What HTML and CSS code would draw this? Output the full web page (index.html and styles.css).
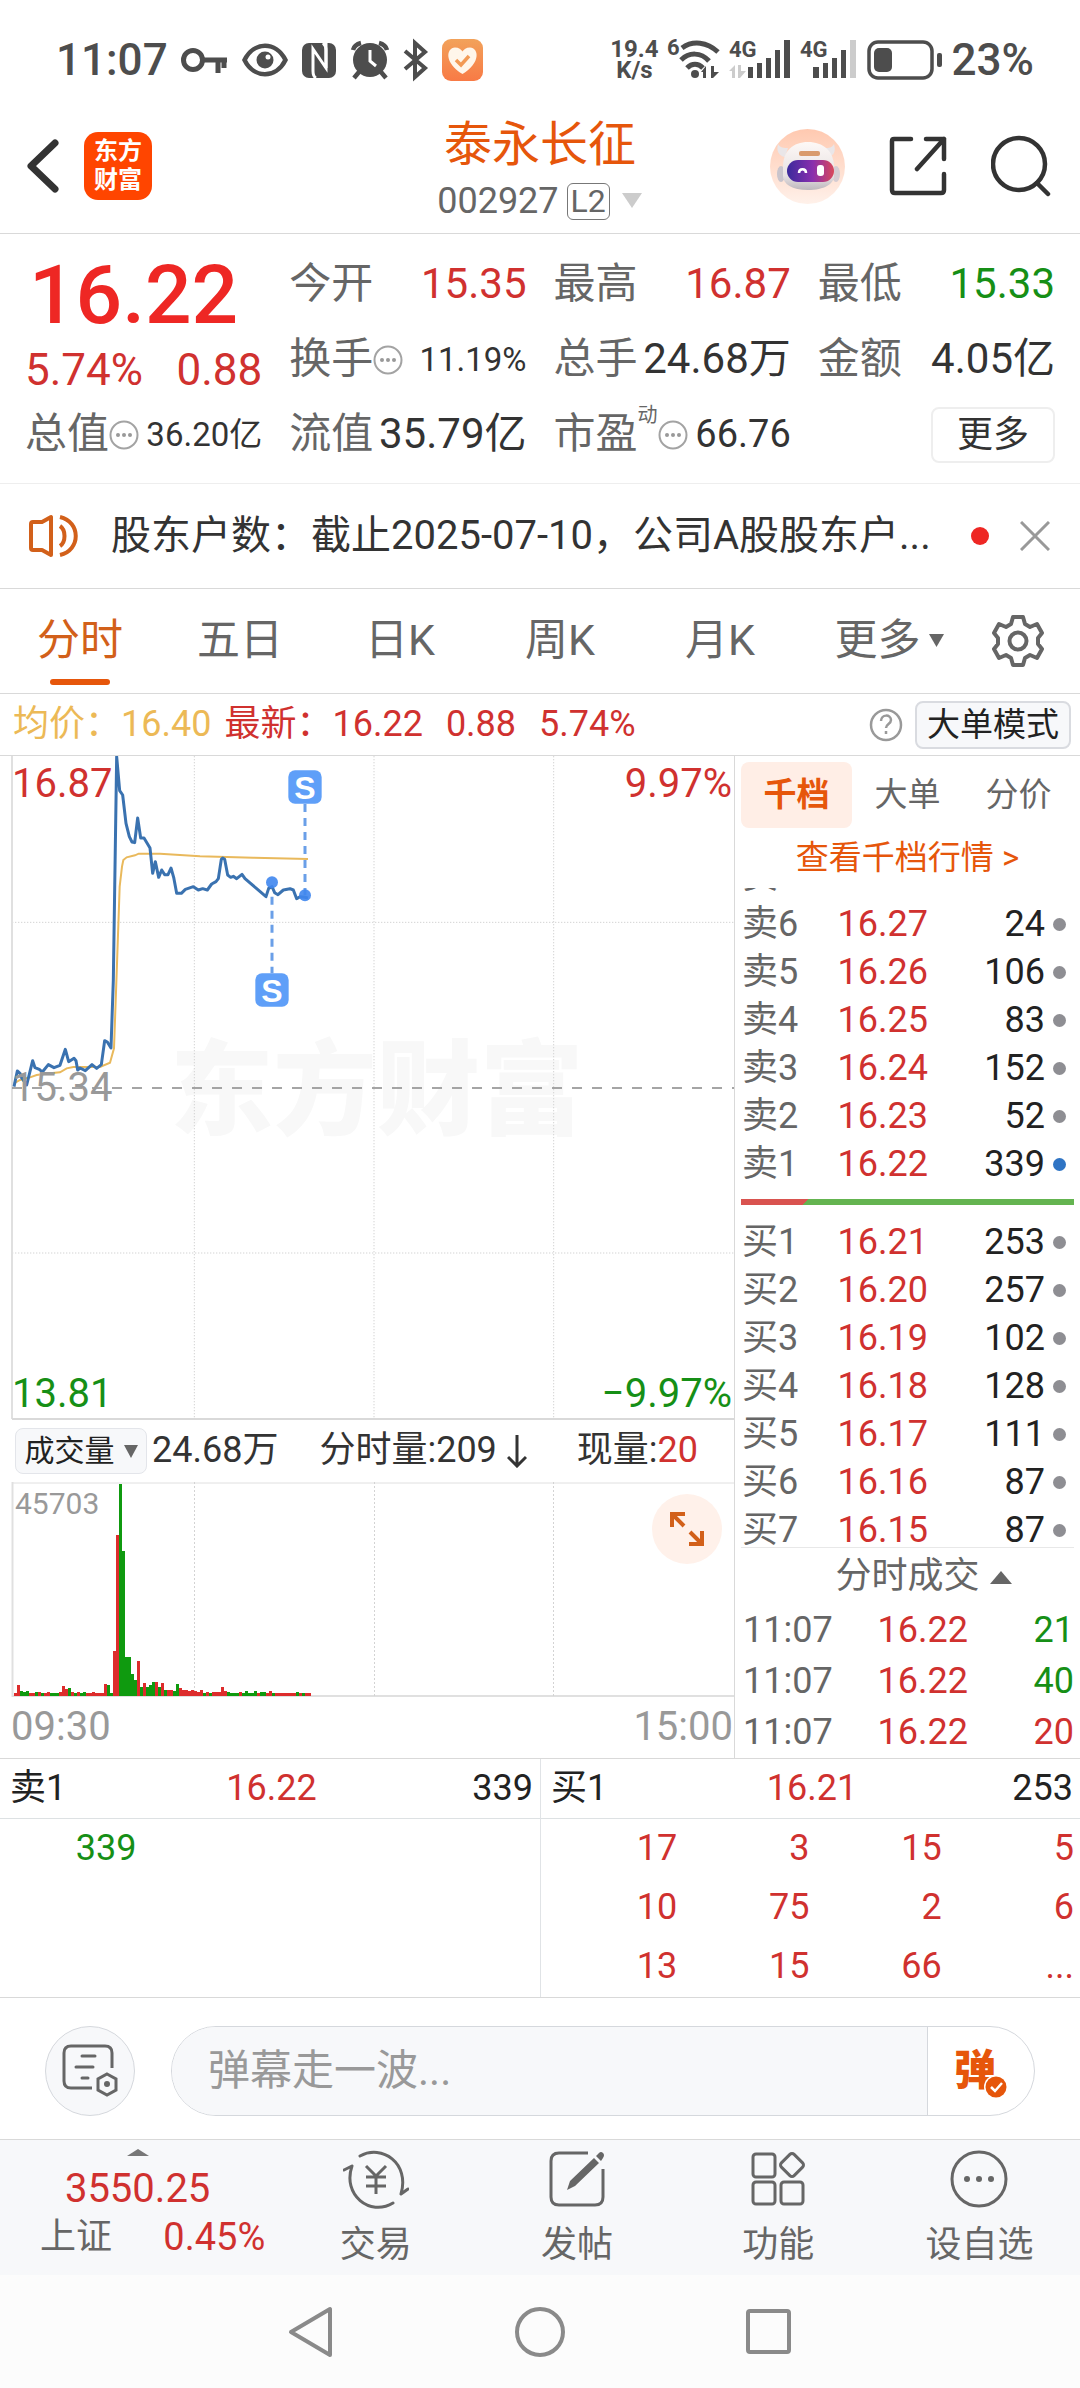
FILE: index.html
```html
<!DOCTYPE html>
<html lang="zh-CN">
<head>
<meta charset="utf-8">
<meta name="viewport" content="width=device-width, initial-scale=1">
<title>泰永长征 002927</title>
<link rel="stylesheet" href="styles.css">
</head>
<body>
<div class="page">

  <div class="status-bar">
    <div class="status-group status-left">
      <span class="clock">11:07</span>
      <svg width="48" height="44" viewBox="0 0 48 44" fill="none" stroke="#4d4d4d"><circle cx="12" cy="22" r="9.500" stroke-width="5"/><path d="M22 22h24M37 22v13M43 22v8" stroke-width="5"/></svg>
      <svg width="46" height="44" viewBox="0 0 46 44" fill="none" stroke="#4d4d4d"><path d="M2.500 22C12 3 34 3 43.500 22C34 41 12 41 2.500 22Z" stroke-width="4.500"/><circle cx="23" cy="22" r="8.500" fill="#4d4d4d" stroke="none"/><circle cx="26" cy="19" r="2.500" fill="#fff" stroke="none"/></svg>
      <svg width="36" height="44" viewBox="0 0 36 44"><rect x="1" y="5" width="34" height="35" rx="7" fill="#4d4d4d"/><path d="M25 5v25L12 11v22c0 4 1 6 3 7" fill="none" stroke="#fff" stroke-width="3"/><path d="M25 30V12c0-3-1-5-3-7" fill="none" stroke="#fff" stroke-width="3"/></svg>
      <svg width="40" height="44" viewBox="0 0 40 44"><g fill="none" stroke="#4d4d4d" stroke-width="4.500"><path d="M3 12c1-4 4-6 8-7M37 12c-1-4-4-6-8-7M9 34l-5 6M31 34l5 6"/></g><circle cx="20" cy="22" r="17" fill="#4d4d4d"/><path d="M20 12v11l6 5" fill="none" stroke="#fff" stroke-width="3"/></svg>
      <svg width="26" height="44" viewBox="0 0 26 44" fill="none" stroke="#4d4d4d" stroke-width="4"><path d="M2 13l20 17-10 9V5l10 9L2 31"/></svg>
      <svg width="42" height="44" viewBox="0 0 42 44"><defs><linearGradient id="heart-bg" x1="0" y1="0" x2="0" y2="1"><stop offset="0" stop-color="#f2a25a"/><stop offset="1" stop-color="#f87a45"/></linearGradient></defs><rect x="0" y="1" width="41" height="42" rx="9" fill="url(#heart-bg)"/><path d="M20.500 36C2 25 4 10 13 9.500c4 0 6 2 7.500 4 1.500-2 3.500-4 7.500-4 9 .5 11 15.500-7.500 26.500z" fill="#fff6ea"/><path d="M14 22l5 5 8-9" fill="none" stroke="#f29a55" stroke-width="3.500"/></svg>
    </div>
    <div class="status-group status-right">
      <span class="net-speed">19.4<br>K/s</span>
      <svg class="net-icon" width="52" height="44" viewBox="0 0 52 44"><text x="-1" y="17" class="net-label">6</text><g fill="none" stroke="#4d4d4d" stroke-width="5"><path d="M14 10c11-8 25-6 36 4M13 22c8-8 20-8 28 1M19 30c5-5 11-5 16 0"/></g><circle cx="27" cy="36" r="4" fill="#4d4d4d"/><path d="M33 34l5-6v12h-3v-6zM43 28h3v6h5l-6 6h-2z" fill="#4d4d4d"/></svg>
      <svg class="net-icon" width="62" height="44" viewBox="0 0 62 44"><text x="0" y="19" class="net-label">4G</text><path d="M0 33l6-6v13H3v-7zM9 27h3v6h5l-6 7H9z" fill="#ccc"/><path d="M19 29h5v11h-5zM28 25h5v15h-5zM37 20h5v20h-5zM46 12h5v28h-5zM55 2h6v38h-6z" fill="#4d4d4d"/></svg>
      <svg class="net-icon" width="58" height="44" viewBox="0 0 58 44"><text x="0" y="19" class="net-label">4G</text><path d="M13 29h6v11h-6zM23 25h5v15h-5zM32 20h5v20h-5zM41 12h5v28h-5z" fill="#4d4d4d"/><path d="M50 2h6v38h-6z" fill="#ccc"/></svg>
      <svg width="76" height="44" viewBox="0 0 76 44"><rect x="2" y="4" width="63" height="36" rx="9" fill="none" stroke="#4d4d4d" stroke-width="3.500"/><rect x="7" y="10" width="18" height="24" rx="5" fill="#4d4d4d"/><rect x="70" y="15" width="5" height="14" rx="2" fill="#4d4d4d"/></svg>
      <span class="clock">23%</span>
    </div>
  </div>

  <header class="header">
    <div class="header-side">
      <button class="icon-button" aria-label="返回"><svg width="32" height="56" viewBox="0 0 32 56" fill="none" stroke="#333" stroke-width="7" stroke-linecap="round" stroke-linejoin="round"><path d="M28 5L4 28l24 23"/></svg></button>
      <a class="logo" href="#">东方<br>财富</a>
    </div>
    <div class="title">
      <h1 class="stock-name">泰永长征</h1>
      <div class="stock-code">002927<span class="level">L2</span><svg width="22" height="16" viewBox="0 0 22 16"><path d="M1 0h20L11 15z" fill="#ccc"/></svg></div>
    </div>
    <div class="header-side header-actions">
      <button class="icon-button" aria-label="智能助手">
        <svg width="75" height="75" viewBox="0 0 75 75"><defs><linearGradient id="bot-bg" x1="0" y1="0" x2="0" y2="1"><stop offset="0" stop-color="#ffc9b0"/><stop offset="1" stop-color="#fff1ea"/></linearGradient><linearGradient id="bot-head" x1="0" y1="0" x2="0" y2="1"><stop offset="0" stop-color="#fdf8f6"/><stop offset=".7" stop-color="#e8e2e3"/><stop offset="1" stop-color="#bdb7bd"/></linearGradient><linearGradient id="bot-face" x1="0" y1="0" x2="1" y2="0"><stop offset="0" stop-color="#3b2a9c"/><stop offset=".55" stop-color="#8a2fae"/><stop offset="1" stop-color="#d8485a"/></linearGradient></defs><circle cx="37.500" cy="37.500" r="37.500" fill="url(#bot-bg)"/><path d="M8 15c2 4 6 4 10 4l-3 9c-6-1-9-6-7-13zM64 15c-2 4-5 4-9 4l3 9c6-1 8-6 6-13z" fill="#eae6e8"/><ellipse cx="11" cy="45" rx="4" ry="8" fill="#c9c4cc"/><ellipse cx="66" cy="45" rx="4" ry="8" fill="#d5ccd2"/><path d="M13 38c0-16 10-25 25-25s26 9 26 25v9c0 8-10 14-26 14s-25-6-25-14z" fill="url(#bot-head)"/><rect x="29" y="22" width="21" height="5" rx="2" fill="#d99a6c"/><rect x="17" y="31" width="47" height="22" rx="11" fill="url(#bot-face)"/><path d="M29 44c0-5 7-5 7 0" fill="none" stroke="#fff" stroke-width="2.500"/><rect x="47" y="36" width="7" height="11" rx="3" fill="#fff"/></svg>
      </button>
      <button class="icon-button share" aria-label="分享"><svg width="58" height="60" viewBox="0 0 58 60" fill="none" stroke="#333" stroke-width="4.500" stroke-linecap="round" stroke-linejoin="round"><path d="M22 3H5q-2 0-2 2v49q0 3 3 3h46q3 0 3-3V38M37 3h18v20M55 3L28 33"/></svg></button>
      <button class="icon-button" aria-label="搜索"><svg width="60" height="62" viewBox="0 0 60 62" fill="none" stroke="#333" stroke-width="4.500" stroke-linecap="round"><circle cx="28" cy="29" r="26"/><path d="M46 48l11 11"/></svg></button>
    </div>
  </header>

  <section class="quote">
    <div class="quote-main">
      <div class="last-price">16.22</div>
      <div class="change"><span>5.74%</span><span>0.88</span></div>
    </div>
    <div class="stat"><span class="stat-label">今开</span><span class="stat-value up">15.35</span></div>
    <div class="stat"><span class="stat-label">最高</span><span class="stat-value up">16.87</span></div>
    <div class="stat"><span class="stat-label">最低</span><span class="stat-value down">15.33</span></div>
    <div class="stat"><span class="stat-label">换手</span><svg class="dots" viewBox="0 0 30 30"><use href="#dots-icon"/></svg><span class="stat-value small">11.19%</span></div>
    <div class="stat"><span class="stat-label">总手</span><span class="stat-value">24.68万</span></div>
    <div class="stat"><span class="stat-label">金额</span><span class="stat-value">4.05亿</span></div>
    <div class="stat"><span class="stat-label">总值</span><svg class="dots" viewBox="0 0 30 30"><g id="dots-icon"><circle cx="15" cy="15" r="13.500" fill="none" stroke="#a3a3a3" stroke-width="2"/><g fill="#999"><circle cx="9" cy="15" r="2"/><circle cx="15" cy="15" r="2"/><circle cx="21" cy="15" r="2"/></g></g></svg><span class="stat-value small">36.20亿</span></div>
    <div class="stat"><span class="stat-label">流值</span><span class="stat-value">35.79亿</span></div>
    <div class="stat"><span class="stat-label">市盈</span><span class="stat-sup">动</span><svg class="dots" viewBox="0 0 30 30"><use href="#dots-icon"/></svg><span class="stat-value medium">66.76</span></div>
    <div class="stat stat-end"><button class="more-button">更多</button></div>
  </section>

  <section class="notice">
    <svg class="speaker" width="54" height="44" viewBox="0 0 54 44" fill="none" stroke="#d2601a" stroke-width="4" stroke-linejoin="round"><path d="M3 10q0-2 2-2h9L23 3v38L14 36H5q-2 0-2-2zM32 12c6 4 6 16 0 20M32 3c21 5 21 33 0 38"/></svg>
    <a class="notice-text" href="#">股东户数：截止2025-07-10，公司A股股东户...</a>
    <span class="notice-dot"></span>
    <button class="icon-button" aria-label="关闭"><svg width="30" height="30" viewBox="0 0 30 30" stroke="#999" stroke-width="3"><path d="M1 1l28 28M29 1L1 29"/></svg></button>
  </section>

  <nav class="tabs">
    <button class="tab active">分时</button>
    <button class="tab">五日</button>
    <button class="tab">日K</button>
    <button class="tab">周K</button>
    <button class="tab">月K</button>
    <button class="tab">更多<svg width="15" height="14" viewBox="0 0 15 14"><path d="M0 0h15L7.500 13z" fill="#666"/></svg></button>
    <button class="tab" aria-label="设置"><svg width="54" height="54" viewBox="0 0 54 54" fill="none" stroke="#666" stroke-width="4" stroke-linejoin="round"><path d="M22 3h10l2 7 5 3 7-3 5 9-4 5v6l4 5-5 9-7-3-5 3-2 7H22l-2-7-5-3-7 3-5-9 4-5v-6l-4-5 5-9 7 3 5-3z"/><circle cx="27" cy="27" r="8.500"/></svg></button>
  </nav>

  <div class="info">
    <span class="avg">均价：16.40</span>
    <span class="latest"><span>最新：16.22</span><span>0.88</span><span>5.74%</span></span>
    <button class="icon-button help" aria-label="说明"><svg width="34" height="34" viewBox="0 0 34 34" fill="none" stroke="#999" stroke-width="2.500"><circle cx="17" cy="17" r="15"/><path d="M12 13c0-7 10-7 10-1 0 4-5 4-5 8M17 23v3"/></svg></button>
    <button class="mode-button">大单模式</button>
  </div>

  <main class="market">
    <div class="charts">
      <div class="price-chart">
        <svg class="chart-svg" viewBox="0 48 2202 1992">
          <text x="510" y="1160" class="watermark">东方财富</text>
          <g fill="none" stroke="#d3d3d3" stroke-width="3" stroke-dasharray="4 5"><path d="M583 48V2036M1122 48V2036M1661 48V2036M36 547H2202M36 1539H2202"/></g>
          <path d="M36 48V2037" stroke="#e0e0e0" stroke-width="6"/>
          <path d="M36 2037H2202" stroke="#d9d9d9" stroke-width="6"/>
          <path d="M36 1044H2202" stroke="#888" stroke-width="5" stroke-dasharray="30 30"/>
          <path d="M42 1030L60 1020 90 1012 110 1005 150 1000 180 997 200 985 220 981 300 981 330 968 342 925 350 700 359 440 366 380 370 360 380 352 405 346 416 341 480 341 600 349 760 353 924 357" fill="none" stroke="#e9b95c" stroke-width="6"/>
          <path d="M42 1040L52 993 60 1000 64 1012 80 1035 98 962 105 983 118 988 127 996 145 974 162 983 180 976 196 928 206 965 222 955 228 962 233 990 240 984 256 992 276 974 290 985 304 974 314 902 322 906 333 924 340 720 350 50 359 152 368 165 378 250 388 290 396 306 404 308 413 234 422 294 432 294 450 324 458 400 466 365 476 412 485 390 494 404 504 404 513 384 521 412 530 460 544 460 556 448 580 440 595 450 608 446 622 450 635 432 648 425 655 416 664 358 668 354 674 358 683 405 692 412 700 409 710 416 726 403 735 416 770 446 798 470 806 445 816 440 824 458 834 464 850 450 870 446 880 450 890 476 900 470 914 472 924 474" fill="none" stroke="#3a72b0" stroke-width="9" stroke-linejoin="round"/>
          <g stroke="#6a9fe8" stroke-width="9" stroke-dasharray="24 18"><path d="M915 192V466M816 470V700"/></g>
          <g fill="#3f86ee" fill-opacity=".9"><circle cx="816" cy="427" r="18"/><circle cx="915" cy="466" r="18"/></g>
          <g fill="#5f9ff8"><rect x="865" y="91" width="100" height="100" rx="20"/><rect x="766" y="700" width="100" height="100" rx="20"/></g>
          <g class="marker"><text x="915" y="177">S</text><text x="816" y="786">S</text></g>
        </svg>
        <span class="axis-label top-left up">16.87</span>
        <span class="axis-label top-right up">9.97%</span>
        <span class="axis-label mid-left">15.34</span>
        <span class="axis-label bottom-left down">13.81</span>
        <span class="axis-label bottom-right down">−9.97%</span>
      </div>
      <div class="volume-head">
        <button class="indicator">成交量<svg width="14" height="13" viewBox="0 0 14 13"><path d="M0 0h14L7 13z" fill="#666"/></svg></button>
        <span>24.68万</span>
        <span class="minute-volume">分时量:209<svg width="20" height="34" viewBox="0 0 20 34" fill="none" stroke="#333" stroke-width="3"><path d="M10 1v31M1 23l9 9 9-9"/></svg></span>
        <span>现量:<span class="up">20</span></span>
      </div>
      <div class="volume-chart">
        <svg class="chart-svg" viewBox="0 0 734 215">
          <path d="M12 1H734" stroke="#e0e0e0" stroke-width="1"/>
          <path d="M12.500 0V215" stroke="#e0e0e0" stroke-width="2"/>
          <path d="M12 214H734" stroke="#e0e0e0" stroke-width="2"/>
          <path d="M194.500 0V214M374.500 0V214M553.500 0V214" stroke="#d3d3d3" stroke-dasharray="2 2"/>
          <g id="volume-bars"></g>
        </svg>
        <span class="volume-max">45703</span>
        <button class="expand" aria-label="全屏"><svg width="34" height="34" viewBox="0 0 34 34" fill="none" stroke="#d2601a" stroke-width="4"><path d="M2 15V2h13M3 3l11 11M19 32h13V19M31 31L20 20"/></svg></button>
      </div>
      <div class="time-axis"><span>09:30</span><span>15:00</span></div>
    </div>

    <aside class="side">
      <div class="side-tabs">
        <button class="side-tab active">千档</button>
        <button class="side-tab">大单</button>
        <button class="side-tab">分价</button>
      </div>
      <a class="depth-link" href="#">查看千档行情 &gt;</a>
      <div class="book sell">
        <table>
          <tr><th>卖7</th><td>16.28</td><td>77</td><td><i class="dot"></i></td></tr>
          <tr><th>卖6</th><td>16.27</td><td>24</td><td><i class="dot"></i></td></tr>
          <tr><th>卖5</th><td>16.26</td><td>106</td><td><i class="dot"></i></td></tr>
          <tr><th>卖4</th><td>16.25</td><td>83</td><td><i class="dot"></i></td></tr>
          <tr><th>卖3</th><td>16.24</td><td>152</td><td><i class="dot"></i></td></tr>
          <tr><th>卖2</th><td>16.23</td><td>52</td><td><i class="dot"></i></td></tr>
          <tr><th>卖1</th><td>16.22</td><td>339</td><td><i class="dot blue"></i></td></tr>
        </table>
      </div>
      <div class="ratio"></div>
      <div class="book buy">
        <table>
          <tr><th>买1</th><td>16.21</td><td>253</td><td><i class="dot"></i></td></tr>
          <tr><th>买2</th><td>16.20</td><td>257</td><td><i class="dot"></i></td></tr>
          <tr><th>买3</th><td>16.19</td><td>102</td><td><i class="dot"></i></td></tr>
          <tr><th>买4</th><td>16.18</td><td>128</td><td><i class="dot"></i></td></tr>
          <tr><th>买5</th><td>16.17</td><td>111</td><td><i class="dot"></i></td></tr>
          <tr><th>买6</th><td>16.16</td><td>87</td><td><i class="dot"></i></td></tr>
          <tr><th>买7</th><td>16.15</td><td>87</td><td><i class="dot"></i></td></tr>
        </table>
      </div>
      <button class="deals-title">分时成交<svg width="22" height="14" viewBox="0 0 22 14"><path d="M0 14L11 1l11 13z" fill="#666"/></svg></button>
      <table class="deals">
        <tr><th>11:07</th><td>16.22</td><td class="down">21</td></tr>
        <tr><th>11:07</th><td>16.22</td><td class="down">40</td></tr>
        <tr><th>11:07</th><td>16.22</td><td class="up">20</td></tr>
      </table>
    </aside>
  </main>

  <section class="queues">
    <div class="queue">
      <div class="queue-head"><span>卖1</span><span class="up">16.22</span><span>339</span></div>
      <div class="queue-body down"><span>339</span></div>
    </div>
    <div class="queue">
      <div class="queue-head"><span>买1</span><span class="up">16.21</span><span>253</span></div>
      <div class="queue-body up">
        <span>17</span><span>3</span><span>15</span><span>5</span>
        <span>10</span><span>75</span><span>2</span><span>6</span>
        <span>13</span><span>15</span><span>66</span><span>...</span>
      </div>
    </div>
  </section>

  <form class="comment">
    <button type="button" class="comment-settings" aria-label="弹幕设置"><svg width="56" height="54" viewBox="0 0 56 54" fill="none" stroke="#666" stroke-width="3" stroke-linecap="round"><path d="M30 44H9q-7 0-7-7V9q0-7 7-7h34q7 0 7 7v15" stroke-linecap="butt"/><path d="M20 12h13M14 23h17M20 34h6"/><path d="M45 30l9 5v11l-9 5-9-5V35z"/><circle cx="45" cy="40" r="3" fill="#666" stroke="none"/></svg></button>
    <div class="comment-box">
      <input class="comment-input" type="text" placeholder="弹幕走一波..." aria-label="弹幕">
      <button type="button" class="comment-toggle" aria-label="弹幕开关">弹<svg class="check" width="24" height="24" viewBox="0 0 24 24"><circle cx="12" cy="12" r="12" fill="#fff"/><circle cx="12" cy="12" r="10.500" fill="#e6560b"/><path d="M7 12l4 4 7-8" fill="none" stroke="#fff" stroke-width="2.500"/></svg></button>
    </div>
  </form>

  <nav class="bottom-nav">
    <a class="index" href="#">
      <svg width="22" height="7" viewBox="0 0 22 7"><path d="M0 7L11 0l11 7z" fill="#777"/></svg>
      <span class="index-value">3550.25</span>
      <span class="index-row"><span>上证</span><span class="index-change">0.45%</span></span>
    </a>
    <a class="nav-item" href="#"><svg width="66" height="60" viewBox="0 0 66 60" fill="none" stroke="#666" stroke-width="3" stroke-linecap="round" stroke-linejoin="round"><path d="M17 7C39-5 67 14 58 45l7-5M50 54C27 68-1 46 9 17l-8 4"/><path d="M23 17l10 10 10-10M33 27v18M23 28h20M23 37h20" stroke-linecap="butt"/></svg>交易</a>
    <a class="nav-item" href="#"><svg width="58" height="60" viewBox="0 0 58 60"><path d="M40 4H11Q3 4 3 12v36q0 8 8 8h36q8 0 8-8V20" fill="none" stroke="#666" stroke-width="3"/><path d="M19 41l3-9 24-23 5 5-24 23zM48 7l3-3q2-2 4 0t0 5l-2 3z" fill="#666"/></svg>发帖</a>
    <a class="nav-item" href="#"><svg width="54" height="60" viewBox="0 0 54 60" fill="none" stroke="#666" stroke-width="3"><rect x="2" y="5" width="22" height="23" rx="3"/><rect x="2" y="33" width="22" height="22" rx="3"/><rect x="30" y="33" width="22" height="22" rx="3"/><rect x="32" y="7" width="18" height="18" rx="3" transform="rotate(45 41 16)"/></svg>功能</a>
    <a class="nav-item" href="#"><svg width="58" height="60" viewBox="0 0 58 60"><circle cx="29" cy="30" r="27" fill="none" stroke="#666" stroke-width="3"/><g fill="#666"><circle cx="17" cy="30" r="3"/><circle cx="29" cy="30" r="3"/><circle cx="41" cy="30" r="3"/></g></svg>设自选</a>
  </nav>

  <div class="system-nav">
    <button class="icon-button" aria-label="后退"><svg width="50" height="54" viewBox="0 0 50 54" fill="none" stroke="#8a8a8a" stroke-width="4" stroke-linejoin="round"><path d="M44 4v46L5 27z"/></svg></button>
    <button class="icon-button" aria-label="主页"><svg width="52" height="54" viewBox="0 0 52 54" fill="none" stroke="#8a8a8a" stroke-width="4"><circle cx="26" cy="27" r="23"/></svg></button>
    <button class="icon-button" aria-label="最近任务"><svg width="50" height="54" viewBox="0 0 50 54" fill="none" stroke="#8a8a8a" stroke-width="4"><rect x="4" y="6" width="41" height="41" rx="2"/></svg></button>
  </div>
</div>
<script src="chart.js"></script>
</body>
</html>
```

FILE: styles.css
```css
* { box-sizing: border-box; }

body {
  margin: 0;
  background: #fff;
  color: #333;
  font-family: Roboto, "Noto Sans CJK SC", sans-serif;
  font-size: 36px;
  line-height: 1.2;
}

button {
  margin: 0;
  padding: 0;
  border: 0;
  background: none;
  color: inherit;
  font: inherit;
}

a { color: inherit; text-decoration: none; }
svg { display: block; flex: none; }
table { border-collapse: collapse; table-layout: fixed; width: 100%; }
th, td { padding: 0; font-weight: 400; text-align: left; }

.page { display: flex; flex-direction: column; }
.up { color: #d0312f; }
.down { color: #168f16; }
.icon-button { display: flex; flex: none; }

/* Status bar */
.status-bar {
  display: flex;
  justify-content: space-between;
  height: 115px;
  padding: 5px 46px 0 56px;
  color: #4d4d4d;
}
.status-group { display: flex; align-items: center; }
.status-left { gap: 13px; }
.status-right { gap: 9px; }
.clock { font-size: 44px; font-weight: 500; line-height: 44px; }
.net-speed { font-size: 24px; font-weight: 700; line-height: 21px; text-align: center; }
.net-icon { overflow: visible; }
.net-label { font-size: 22px; font-weight: 700; fill: #4d4d4d; }

/* Title bar */
.header {
  display: grid;
  grid-template-columns: 1fr auto 1fr;
  height: 119px;
  border-bottom: 1px solid #d9d9d9;
}
.header-side { display: flex; align-items: center; gap: 25px; padding: 0 29px 16px 27px; }
.header-actions { justify-content: flex-end; gap: 44px; }
.logo {
  display: flex;
  align-items: center;
  justify-content: center;
  width: 68px;
  height: 68px;
  border-radius: 14px;
  background: #ff4500;
  color: #fff;
  font-size: 24px;
  font-weight: 700;
  line-height: 29px;
}
.title { display: flex; flex-direction: column; align-items: center; }
.stock-name { margin: 0; color: #e6560b; font-size: 48px; font-weight: 400; line-height: 60px; }
.stock-code { display: flex; align-items: center; color: #666; line-height: 52px; }
.level {
  margin: 0 11px 0 8px;
  padding: 0 3px;
  border: 1px solid #777;
  border-radius: 6px;
  font-size: 32px;
  line-height: 35px;
}

/* Quote */
.quote {
  display: grid;
  grid-template-columns: repeat(4, 1fr);
  grid-auto-rows: 75px;
  column-gap: 27px;
  padding: 13px 25px 11px;
  border-bottom: 1px solid #eee;
}
.quote-main { grid-row: span 2; }
.last-price { padding-left: 4px; color: #ee2724; font-size: 82px; font-weight: 500; line-height: 96px; }
.change { display: flex; justify-content: space-between; color: #d0312f; font-size: 44px; line-height: 54px; }
.stat { display: flex; align-items: center; font-size: 42px; white-space: nowrap; }
.stat-label { color: #666; }
.stat-value { margin-left: auto; }
.stat-value.small { font-size: 33px; }
.stat-value.medium { font-size: 38px; }
.stat-sup { align-self: flex-start; color: #666; font-size: 20px; line-height: 36px; }
.stat-end { justify-content: flex-end; }
.dots { width: 30px; height: 30px; }
.more-button {
  width: 124px;
  height: 56px;
  border: 2px solid #eee;
  border-radius: 8px;
  font-size: 36px;
  line-height: 48px;
}

/* Notice */
.notice {
  display: flex;
  align-items: center;
  height: 105px;
  padding: 0 30px 0 28px;
  border-bottom: 1px solid #d9d9d9;
}
.notice-text {
  flex: 1;
  min-width: 0;
  margin-left: 29px;
  overflow: hidden;
  font-size: 40px;
  line-height: 56px;
  white-space: nowrap;
}
.notice-dot { width: 18px; height: 18px; margin-right: 31px; border-radius: 9px; background: #ee2724; }

/* Period tabs */
.tabs {
  display: grid;
  grid-template-columns: repeat(5, 160fr) 178fr 80fr;
  height: 105px;
  padding-right: 22px;
  border-bottom: 1px solid #d9d9d9;
}
.tab {
  display: flex;
  position: relative;
  align-items: center;
  justify-content: center;
  gap: 8px;
  color: #666;
  font-size: 43px;
}
.tab.active { color: #d2601a; }
.tab.active::after {
  position: absolute;
  bottom: 8px;
  left: 50%;
  width: 60px;
  height: 6px;
  margin-left: -30px;
  border-radius: 3px;
  background: #e6560b;
  content: "";
}

/* Price summary */
.info {
  display: flex;
  align-items: center;
  height: 62px;
  padding: 0 9px 0 13px;
  border-bottom: 1px solid #d9d9d9;
}
.avg { color: #ecb956; }
.latest { display: flex; gap: 23px; margin-left: 13px; color: #d0312f; }
.help { margin-left: auto; }
.mode-button {
  width: 156px;
  height: 48px;
  margin-left: 12px;
  border: 2px solid #d9dbe0;
  border-radius: 8px;
  background: #f7f8fa;
  color: #222;
  font-size: 33px;
  line-height: 42px;
}

/* Charts and order book */
.market {
  display: grid;
  grid-template-columns: minmax(0, 734fr) minmax(0, 346fr);
  border-bottom: 1px solid #d9d9d9;
}
.price-chart, .volume-chart { position: relative; }
.chart-svg { width: 100%; height: auto; }
.watermark { fill: #f8f8f8; font-size: 310px; font-weight: 900; }
.marker { fill: #fff; font-size: 96px; font-weight: 700; text-anchor: middle; font-family: "Liberation Sans", sans-serif; }
.axis-label { position: absolute; font-size: 40px; line-height: 48px; }
.top-left { top: 4px; left: 12px; }
.top-right { top: 4px; right: 2px; }
.mid-left { top: 50%; left: 12px; margin-top: -24px; color: #999; }
.bottom-left { bottom: 2px; left: 12px; }
.bottom-right { right: 2px; bottom: 2px; }

.volume-head { display: flex; align-items: center; gap: 5px; height: 62px; padding-left: 15px; white-space: nowrap; }
.indicator {
  display: flex;
  align-items: center;
  justify-content: center;
  gap: 9px;
  width: 132px;
  height: 46px;
  border: 1px solid #e3e5ea;
  border-radius: 8px;
  background: #f7f8fa;
  color: #222;
  font-size: 30px;
}
.minute-volume { display: flex; align-items: center; gap: 10px; margin: 0 45px 0 36px; }
.volume-max { position: absolute; top: 4px; left: 15px; color: #999; font-size: 30px; line-height: 36px; }
.expand {
  display: flex;
  position: absolute;
  top: 12px;
  right: 12px;
  align-items: center;
  justify-content: center;
  width: 70px;
  height: 70px;
  border-radius: 35px;
  background: #fff1ea;
}
.time-axis { display: flex; justify-content: space-between; padding: 0 1px 0 11px; color: #999; font-size: 40px; line-height: 60px; }

.side { padding: 6px 6px 0; border-left: 1px solid #d9d9d9; }
.side-tabs { display: grid; grid-template-columns: repeat(3, 1fr); height: 66px; }
.side-tab { border-radius: 8px; color: #666; font-size: 33px; }
.side-tab.active { background: #ffeee6; color: #e6560b; font-weight: 700; }
.depth-link { display: block; color: #e6560b; font-size: 33px; line-height: 60px; text-align: center; }
.book { display: flex; overflow: hidden; flex-direction: column; }
.book.sell { justify-content: flex-end; height: 300px; }
.book.buy { height: 329px; }
.book tr { height: 48px; line-height: 48px; }
.book th { width: 29%; padding-left: 1px; color: #666; }
.book td:nth-child(2) { color: #d0312f; }
.book td:nth-child(3) { width: 27%; color: #222; text-align: right; }
.book td:last-child { width: 29px; padding-left: 8px; }
.dot { display: block; width: 13px; height: 13px; border-radius: 7px; background: #8e8e93; }
.dot.blue { background: #2f74c4; }
.ratio {
  height: 6px;
  margin: 11px 0 13px;
  background: linear-gradient(135deg, #d9534f 20%, #64b450 20%);
}
.deals-title {
  display: flex;
  align-items: center;
  justify-content: center;
  gap: 10px;
  width: 100%;
  height: 58px;
  padding-left: 32px;
  border-top: 1px solid #e8e8e8;
  color: #666;
}
.deals tr { height: 51px; line-height: 51px; }
.deals th { width: 41%; padding-left: 2px; color: #666; }
.deals td:nth-child(2) { color: #d0312f; }
.deals td:last-child { width: 20%; text-align: right; }

/* Order queues */
.queues { display: grid; grid-template-columns: 1fr 1fr; border-bottom: 1px solid #d9d9d9; }
.queue + .queue { border-left: 1px solid #e0e3e6; }
.queue-head {
  display: grid;
  grid-template-columns: 1fr 1fr 1fr;
  padding: 0 7px 0 10px;
  border-bottom: 1px solid #dde1e3;
  color: #222;
  line-height: 59px;
}
.queue-head span:nth-child(2) { text-align: center; }
.queue-head .up { color: #d0312f; }
.queue-head span:last-child { text-align: right; }
.queue-body {
  display: grid;
  grid-template-columns: repeat(4, 1fr);
  padding: 0 6px 1px 4px;
  line-height: 59px;
  text-align: right;
}

/* Comment bar */
.comment { display: flex; gap: 36px; padding: 28px 45px 23px; border-bottom: 1px solid #d9d9d9; }
.comment-settings {
  display: flex;
  flex: none;
  align-items: center;
  justify-content: center;
  width: 90px;
  height: 90px;
  border: 1px solid #d5d8dd;
  border-radius: 45px;
  background: #f7f8fa;
}
.comment-box {
  display: flex;
  overflow: hidden;
  flex: 1;
  min-width: 0;
  height: 90px;
  border: 1px solid #d5d8dd;
  border-radius: 45px;
}
.comment-input {
  flex: 1;
  min-width: 0;
  padding: 0 0 0 36px;
  border: 0;
  background: #f7f8fa;
  font: inherit;
  font-size: 42px;
}
.comment-input::placeholder { color: #999; opacity: 1; }
.comment-toggle {
  position: relative;
  width: 107px;
  padding-right: 12px;
  border-left: 1px solid #d5d8dd;
  color: #e6560b;
  font-size: 42px;
  font-weight: 900;
  line-height: 80px;
}
.check { position: absolute; right: 26px; bottom: 16px; }

/* Bottom navigation */
.bottom-nav {
  display: grid;
  grid-template-columns: 275fr repeat(4, 201fr);
  height: 135px;
  background: #f7f8fa;
  color: #666;
  line-height: 48px;
}
.index { display: flex; flex-direction: column; align-items: center; padding-top: 9px; }
.index-value { margin-top: 9px; color: #d0312f; font-size: 40px; }
.index-row { display: flex; align-self: flex-start; justify-content: space-between; width: 100%; padding: 0 10px 0 40px; }
.index-change { color: #d0312f; font-size: 38px; }
.nav-item { display: flex; flex-direction: column; align-items: center; gap: 12px; padding-top: 9px; }

.system-nav {
  display: flex;
  align-items: center;
  justify-content: center;
  gap: 178px;
  height: 114px;
  background: #fcfcfc;
}
```

FILE: chart.js
```js
// Minute volumes as [colour, height]: r = rising, g = falling.
const bars = "r3 r11 g5 g4 g5 r3 r3 g4 r4 g3 r3 r4 g3 g3 g3 r4 r10 r7 g8 r4 g3 r4 g3 g4 r3 r3 r4 r3 r3 r3 r12 g11 g3 r45 r161 g212 g145 g39 g39 g22 g16 r35 g9 r13 g9 g11 g14 r14 g9 r13 g6 r6 r6 g5 g12 r8 r6 r6 r5 r6 r5 r4 r6 g3 r4 g3 r4 r4 r4 r9 r5 g4 g3 g3 g3 r4 g3 g5 g3 g3 g5 r3 g4 g4 r3 r5 g3 r3 r3 r3 r3 r3 r3 r3 g4 r3 g3 r3 r3".split(" ");
const group = document.getElementById("volume-bars");

bars.forEach((bar, i) => {
  const height = Number(bar.slice(1));
  const rect = document.createElementNS("http://www.w3.org/2000/svg", "rect");
  rect.setAttribute("x", 14 + i * 3);
  rect.setAttribute("y", 214 - height);
  rect.setAttribute("width", 3);
  rect.setAttribute("height", height);
  rect.setAttribute("fill", bar[0] === "r" ? "#dd2c2c" : "#0f9a0f");
  group.appendChild(rect);
});
```
